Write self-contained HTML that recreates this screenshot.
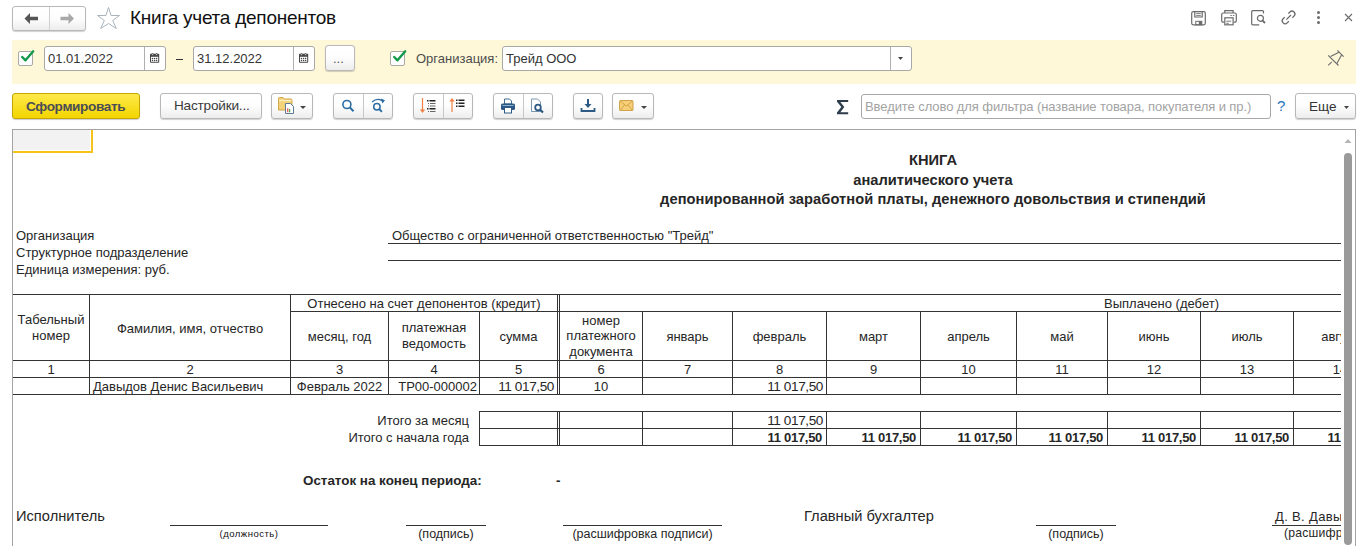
<!DOCTYPE html><html><head><meta charset="utf-8"><style>

*{box-sizing:border-box;margin:0;padding:0}
html,body{width:1360px;height:546px;overflow:hidden;background:#fff}
body{position:relative;font-family:"Liberation Sans",sans-serif;color:#333}
.abs{position:absolute}
.t{position:absolute;white-space:nowrap;line-height:15px}
.btn{position:absolute;border:1px solid #b8b8b8;border-radius:3px;background:linear-gradient(#fff 0%,#fdfdfd 50%,#ededed 100%);box-shadow:0 1px 1px rgba(0,0,0,.18)}
.hl{position:absolute;height:1px;background:#333}
.vl{position:absolute;width:1px;background:#333}
.c{position:absolute;display:flex;align-items:center;justify-content:center;text-align:center;white-space:nowrap;font-size:13px;line-height:15.6px;color:#262626}
.r{justify-content:flex-end;padding-right:2px}
.l{justify-content:flex-start;padding-left:2px}
.b{font-weight:bold}
.num{font-size:13.6px;letter-spacing:-0.4px;padding-right:3px}

</style></head><body>
<div class="btn" style="left:12px;top:6px;width:74px;height:25px"></div>
<div class="abs" style="left:49px;top:7px;width:1px;height:23px;background:#d0d0d0"></div>
<svg class="abs" style="left:24px;top:12px" width="16" height="13" viewBox="0 0 16 13"><path d="M0.5 6.5 L6 1 L6 4.8 L14 4.8 L14 8.2 L6 8.2 L6 12 Z" fill="#555"/></svg>
<svg class="abs" style="left:59px;top:12px" width="16" height="13" viewBox="0 0 16 13"><path d="M15 6.5 L9.5 1 L9.5 4.8 L1.5 4.8 L1.5 8.2 L9.5 8.2 L9.5 12 Z" fill="#a8a8a8"/></svg>
<svg class="abs" style="left:96px;top:6px" width="26" height="25" viewBox="0 0 26 25"><path d="M12.5 1.5 L15.1 9.5 L23.5 9.5 L16.7 14.5 L20.3 22.5 L12.5 17.5 L4.7 22.5 L8.3 14.5 L1.5 9.5 L9.9 9.5 Z" fill="none" stroke="#aab4bc" stroke-width="1" stroke-linejoin="miter"/></svg>
<div class="t" style="left:130px;top:7px;font-size:19px;letter-spacing:-0.25px;line-height:22px;color:#111">Книга учета депонентов</div>
<svg class="abs" style="left:1190px;top:10px" width="17" height="16" viewBox="0 0 17 16" fill="none" stroke="#6b6b6b" stroke-width="1.2">
<rect x="1.7" y="1.7" width="13.6" height="13.1" rx="1.5"/><path d="M4.8 1.7 V7 H12.2 V1.7"/><path d="M6.2 3.4 H10.8 M6.2 5.4 H10.8" stroke-width="0.9"/>
<rect x="5.8" y="11.3" width="6" height="3.5" stroke-width="1"/><rect x="8.8" y="11.3" width="3" height="3.5" fill="#6b6b6b" stroke="none"/></svg>
<svg class="abs" style="left:1220px;top:9px" width="18" height="17" viewBox="0 0 18 17" fill="none" stroke="#6b6b6b" stroke-width="1.2">
<path d="M4.8 4 V1.7 H13.1 V4"/><path d="M4.3 13.2 H3.2 a1.5 1.5 0 0 1 -1.5 -1.5 V5.5 a1.5 1.5 0 0 1 1.5 -1.5 H14.8 a1.5 1.5 0 0 1 1.5 1.5 V11.7 a1.5 1.5 0 0 1 -1.5 1.5 H13.7"/>
<rect x="4.8" y="8.8" width="8.3" height="7"/><path d="M6.3 12.2 H11.2 M6.3 14.3 H8.8 M10.3 6.5 H11.8 M12.8 6.5 H14.3" stroke-width="0.9"/></svg>
<svg class="abs" style="left:1250px;top:9px" width="17" height="17" viewBox="0 0 17 17" fill="none" stroke="#6b6b6b" stroke-width="1.2">
<path d="M13.5 4.5 V2.7 a1 1 0 0 0 -1 -1 H2.7 a1 1 0 0 0 -1 1 V14.8 a1 1 0 0 0 1 1 H9.2"/><circle cx="10.4" cy="9.3" r="3"/><path d="M12.6 11.6 L15 14" stroke-width="1.8"/></svg>
<svg class="abs" style="left:1280px;top:9px" width="17" height="17" viewBox="0 0 17 17" fill="none" stroke="#6b6b6b" stroke-width="1.3">
<g transform="translate(8.5 8.5) rotate(-45)"><path d="M2.6 -2.9 H4.9 A2.9 2.9 0 0 1 4.9 2.9 H2.6 M-2.4 -2.9 H-4.7 A2.9 2.9 0 0 0 -4.7 2.9 H-2.4 M-3 0 H3.5"/></g></svg>
<div class="abs" style="left:1317px;top:11px;width:3px;height:3px;border-radius:50%;background:#6b6b6b"></div>
<div class="abs" style="left:1317px;top:16px;width:3px;height:3px;border-radius:50%;background:#6b6b6b"></div>
<div class="abs" style="left:1317px;top:21px;width:3px;height:3px;border-radius:50%;background:#6b6b6b"></div>
<svg class="abs" style="left:1344px;top:13px" width="9" height="9" viewBox="0 0 9 9" stroke="#6b6b6b" stroke-width="1.1"><path d="M1 1 L8 8 M8 1 L1 8"/></svg>
<div class="abs" style="left:12px;top:40px;width:1344px;height:44px;background:#fff8d8"></div>
<div class="abs" style="left:18px;top:51px;width:15px;height:15px;border:1px solid #a9a9a9;border-radius:2px;background:#fff"></div>
<svg class="abs" style="left:20px;top:48px" width="16" height="16" viewBox="0 0 16 16"><path d="M2.2 9 L5.5 12.3 L13.2 3.3" fill="none" stroke="#12994a" stroke-width="2.4" stroke-linecap="round" stroke-linejoin="round"/></svg>
<div class="abs" style="left:390px;top:51px;width:15px;height:15px;border:1px solid #a9a9a9;border-radius:2px;background:#fff"></div>
<svg class="abs" style="left:392px;top:48px" width="16" height="16" viewBox="0 0 16 16"><path d="M2.2 9 L5.5 12.3 L13.2 3.3" fill="none" stroke="#12994a" stroke-width="2.4" stroke-linecap="round" stroke-linejoin="round"/></svg>
<div class="abs" style="left:44px;top:46px;width:122px;height:25px;border:1px solid #a8a8a8;border-radius:3px;background:#fff"></div>
<div class="abs" style="left:144px;top:47px;width:1px;height:23px;background:#b0b0b0"></div>
<div class="t" style="left:48px;top:51px;font-size:13px;color:#333">01.01.2022</div>
<svg class="abs" style="left:149px;top:52px" width="12" height="12" viewBox="0 0 12 12"><rect x="1" y="1.8" width="9.2" height="9" rx="0.8" fill="#454545"/><rect x="2" y="4.8" width="7.2" height="5" fill="#fff"/>
<circle cx="3.5" cy="2.4" r="0.9" fill="#fff" stroke="#454545" stroke-width="0.8"/><circle cx="7.6" cy="2.4" r="0.9" fill="#fff" stroke="#454545" stroke-width="0.8"/>
<g fill="#454545"><circle cx="3.5" cy="6.4" r="0.75"/><circle cx="5.55" cy="6.4" r="0.75"/><circle cx="7.6" cy="6.4" r="0.75"/><circle cx="3.5" cy="8.5" r="0.75"/><circle cx="5.55" cy="8.5" r="0.75"/><circle cx="7.6" cy="8.5" r="0.75"/></g></svg>
<div class="abs" style="left:176px;top:59px;width:7px;height:1px;background:#333"></div>
<div class="abs" style="left:193px;top:46px;width:122px;height:25px;border:1px solid #a8a8a8;border-radius:3px;background:#fff"></div>
<div class="abs" style="left:293px;top:47px;width:1px;height:23px;background:#b0b0b0"></div>
<div class="t" style="left:197px;top:51px;font-size:13px;color:#333">31.12.2022</div>
<svg class="abs" style="left:298px;top:52px" width="12" height="12" viewBox="0 0 12 12"><rect x="1" y="1.8" width="9.2" height="9" rx="0.8" fill="#454545"/><rect x="2" y="4.8" width="7.2" height="5" fill="#fff"/>
<circle cx="3.5" cy="2.4" r="0.9" fill="#fff" stroke="#454545" stroke-width="0.8"/><circle cx="7.6" cy="2.4" r="0.9" fill="#fff" stroke="#454545" stroke-width="0.8"/>
<g fill="#454545"><circle cx="3.5" cy="6.4" r="0.75"/><circle cx="5.55" cy="6.4" r="0.75"/><circle cx="7.6" cy="6.4" r="0.75"/><circle cx="3.5" cy="8.5" r="0.75"/><circle cx="5.55" cy="8.5" r="0.75"/><circle cx="7.6" cy="8.5" r="0.75"/></g></svg>
<div class="btn" style="left:325px;top:45px;width:30px;height:26px"></div>
<div class="t" style="left:333px;top:51px;font-size:13px;color:#555">...</div>
<div class="t" style="left:416px;top:51px;font-size:13px;color:#4d4d4d">Организация:</div>
<div class="abs" style="left:502px;top:46px;width:410px;height:25px;border:1px solid #a8a8a8;border-radius:3px;background:#fff"></div>
<div class="abs" style="left:890px;top:47px;width:1px;height:23px;background:#b0b0b0"></div>
<div class="t" style="left:506px;top:51px;font-size:13px;color:#333">Трейд ООО</div>
<svg class="abs" style="left:898px;top:57px" width="5" height="3" viewBox="0 0 5 3"><path d="M0 0 H5 L2.5 3 Z" fill="#444"/></svg>
<svg class="abs" style="left:1327px;top:49px" width="18" height="18" viewBox="0 0 18 18" fill="none" stroke="#6b6b6b" stroke-width="1.1">
<path d="M1.2 16.3 L4.8 12.9"/><path d="M1.2 6.3 L11.5 16.5"/><path d="M3.5 7.6 L12 3.2"/><path d="M9.9 14.5 L14.5 6"/><path d="M10.4 1.4 L16.6 7.6"/></svg>
<div class="abs" style="left:12px;top:93px;width:128px;height:26px;border:1px solid #c4a600;border-radius:3px;background:linear-gradient(#ffe94a,#f3d500);box-shadow:0 1px 1px rgba(0,0,0,.2)"></div>
<div class="t b" style="left:26px;top:98.5px;font-size:13.6px;letter-spacing:-0.35px;color:#4a4d55">Сформировать</div>
<div class="btn" style="left:160px;top:93px;width:102px;height:26px"></div>
<div class="t" style="left:174px;top:98px;font-size:13.6px;letter-spacing:-0.2px;color:#3a3a3a">Настройки...</div>
<div class="btn" style="left:271px;top:93px;width:42px;height:26px"></div>
<svg class="abs" style="left:277px;top:96px" width="20" height="19" viewBox="0 0 20 19">
<path d="M1.5 2.5 Q1.5 1.5 2.5 1.5 H6 L7.5 3 H14 Q15 3 15 4 V14 H1.5 Z" fill="#f3d27a" stroke="#c8952e" stroke-width="0.8"/><path d="M2 4.5 H14.5" stroke="#fdf0c0" stroke-width="1.2"/>
<path d="M8.5 7.5 H13.5 L16.5 10.5 V17.5 H8.5 Z" fill="#fff" stroke="#5f7d99" stroke-width="1"/>
<rect x="10.2" y="12.3" width="1.1" height="4" fill="#e43a3a"/><rect x="12.1" y="13" width="1.1" height="3.3" fill="#3aa53a"/></svg>
<svg class="abs" style="left:300px;top:106px" width="6" height="3" viewBox="0 0 6 3"><path d="M0 0 H6 L3.0 3 Z" fill="#444"/></svg>
<div class="btn" style="left:333px;top:93px;width:60px;height:26px"></div>
<div class="abs" style="left:363px;top:94px;width:1px;height:24px;background:#c8c8c8"></div>
<svg class="abs" style="left:341px;top:98px" width="15" height="15" viewBox="0 0 15 15" fill="none" stroke="#2a6ca3"><circle cx="5.9" cy="6.5" r="4" stroke-width="1.6"/><path d="M8.8 9.4 L12.5 13.3" stroke-width="2.1"/></svg>
<svg class="abs" style="left:370px;top:97px" width="16" height="16" viewBox="0 0 16 16" fill="none" stroke="#2a6ca3"><circle cx="6.9" cy="9.7" r="3.2" stroke-width="1.5"/><path d="M9.2 12 L11.9 14.8" stroke-width="1.9"/><path d="M2.1 5 Q7 0.6 12 3.6" stroke-width="1.4"/><path d="M10.8 1.6 L15 3.2 L12.4 6.6 Z" fill="#2a6ca3" stroke="none"/></svg>
<div class="btn" style="left:413px;top:93px;width:60px;height:26px"></div>
<div class="abs" style="left:443px;top:94px;width:1px;height:24px;background:#c8c8c8"></div>
<svg class="abs" style="left:419px;top:97px" width="18" height="18" viewBox="0 0 18 18">
<path d="M3.5 1 V14" stroke="#f08040" stroke-width="1.2"/><path d="M0.8 12.5 L3.5 16 L6.2 12.5 Z" fill="#f08040"/>
<rect x="8" y="3" width="1.5" height="1.5" fill="#222"/><rect x="10.5" y="3" width="6" height="1.5" fill="#222"/>
<rect x="9" y="6" width="1" height="1" fill="#666"/><rect x="11" y="6" width="5.5" height="1" fill="#666"/>
<rect x="9" y="8.5" width="1" height="1" fill="#666"/><rect x="11" y="8.5" width="5.5" height="1" fill="#666"/>
<rect x="8" y="11" width="1.5" height="1.5" fill="#222"/><rect x="10.5" y="11" width="6" height="1.5" fill="#222"/>
<rect x="9" y="14" width="1" height="1" fill="#666"/><rect x="11" y="14" width="5.5" height="1" fill="#666"/></svg>
<svg class="abs" style="left:448px;top:97px" width="18" height="18" viewBox="0 0 18 18">
<path d="M4 3 V15" stroke="#f08040" stroke-width="1.2"/><path d="M1.3 4.5 L4 1 L6.7 4.5 Z" fill="#f08040"/>
<rect x="8" y="2.5" width="1.5" height="1.5" fill="#222"/><rect x="10.5" y="2.5" width="6" height="1.5" fill="#222"/>
<rect x="8" y="5.5" width="1.5" height="1.5" fill="#222"/><rect x="10.5" y="5.5" width="6" height="1.5" fill="#222"/>
<rect x="8" y="8.5" width="1.5" height="1.5" fill="#222"/><rect x="10.5" y="8.5" width="6" height="1.5" fill="#222"/></svg>
<div class="btn" style="left:493px;top:93px;width:60px;height:26px"></div>
<div class="abs" style="left:523px;top:94px;width:1px;height:24px;background:#c8c8c8"></div>
<svg class="abs" style="left:500px;top:98px" width="16" height="16" viewBox="0 0 16 16">
<path d="M4.5 1 H9.5 L11.5 3 V6 H4.5 Z" fill="#fff" stroke="#2d5a85" stroke-width="0.9"/>
<rect x="1" y="5.5" width="14" height="6.5" rx="1.5" fill="#2d5a85"/><rect x="2.5" y="7" width="11" height="1" fill="#8ab0d0"/>
<rect x="4.5" y="9.5" width="7" height="5.5" fill="#fff" stroke="#2d5a85" stroke-width="1"/></svg>
<svg class="abs" style="left:530px;top:98px" width="16" height="16" viewBox="0 0 16 16">
<path d="M1.5 1 H7.5 L10.5 4 V13.5 H1.5 Z" fill="#fff" stroke="#6a8aa6" stroke-width="0.9"/>
<circle cx="8" cy="9.5" r="2.8" fill="#fff" stroke="#2d5a85" stroke-width="1.8"/><path d="M10 11.5 L13 14.5" stroke="#2d5a85" stroke-width="2.2"/></svg>
<div class="btn" style="left:573px;top:93px;width:30px;height:26px"></div>
<svg class="abs" style="left:580px;top:98px" width="16" height="15" viewBox="0 0 16 15">
<path d="M8 1 V9" stroke="#2d5a85" stroke-width="2"/><path d="M4.5 6 L8 10 L11.5 6 Z" fill="#2d5a85"/>
<path d="M1.5 10 V13 H14.5 V10" fill="none" stroke="#2d5a85" stroke-width="1.8"/></svg>
<div class="btn" style="left:612px;top:93px;width:42px;height:26px"></div>
<svg class="abs" style="left:619px;top:100px" width="16" height="12" viewBox="0 0 16 12">
<rect x="0.5" y="0.5" width="13.5" height="10" rx="1" fill="#f6cf78" stroke="#c99a3a" stroke-width="0.9"/>
<path d="M1 1 L7.25 6 L13.5 1 M1 10.5 L5.5 5 M13.5 10.5 L9 5" fill="none" stroke="#c99a3a" stroke-width="0.8"/></svg>
<svg class="abs" style="left:641px;top:106px" width="6" height="3" viewBox="0 0 6 3"><path d="M0 0 H6 L3.0 3 Z" fill="#444"/></svg>
<svg class="abs" style="left:836px;top:99px" width="14" height="17" viewBox="0 0 14 17"><path d="M1 1 H12.2 V3 H4.4 L8.3 8.1 L4.4 13.2 H12.2 V15.2 H1 V13.4 L5.3 8.1 L1 2.8 Z" fill="#2e3d4b"/></svg>
<div class="abs" style="left:861px;top:94px;width:410px;height:25px;border:1px solid #a8a8a8;border-radius:3px;background:#fff"></div>
<div class="t" style="left:865px;top:99px;font-size:13px;letter-spacing:-0.08px;color:#a3a3a3">Введите слово для фильтра (название товара, покупателя и пр.)</div>
<div class="t" style="left:1277px;top:98px;font-size:15px;color:#1f74c0">?</div>
<div class="btn" style="left:1295px;top:93px;width:61px;height:26px"></div>
<div class="t" style="left:1309px;top:99px;font-size:13.5px;color:#333">Еще</div>
<svg class="abs" style="left:1344px;top:106px" width="5" height="3" viewBox="0 0 5 3"><path d="M0 0 H5 L2.5 3 Z" fill="#444"/></svg>
<div class="abs" style="left:12px;top:129px;width:1344px;height:430px;border:1px solid #a3a3a3;border-bottom:none"></div>
<div class="abs" style="left:13px;top:130px;width:77px;height:20px;background:#f2f2f2"></div>
<div class="abs" style="left:91px;top:130px;width:2px;height:23px;background:#f7c21a"></div>
<div class="abs" style="left:13px;top:151px;width:80px;height:2px;background:#f7c21a"></div>
<svg class="abs" style="left:1344px;top:138px" width="8" height="6" viewBox="0 0 8 6"><path d="M0.5 5 L4 1 L7.5 5 Z" fill="#b5b5b5"/></svg>
<div class="abs" style="left:1344px;top:153px;width:8px;height:392px;border-radius:4px;background:#9a9a9a"></div>
<div class="abs" style="left:13px;top:130px;width:1328px;height:416px;overflow:hidden">
<div class="t" style="left:520px;top:20px;width:800px;text-align:center;font-size:14.67px;font-weight:700;line-height:20px;color:#262626">КНИГА</div>
<div class="t" style="left:520px;top:40px;width:800px;text-align:center;font-size:14.67px;font-weight:700;line-height:20px;color:#262626">аналитического учета</div>
<div class="t" style="left:520px;top:59px;width:800px;text-align:center;font-size:14.67px;font-weight:700;line-height:20px;color:#262626"><span style="letter-spacing:0.06px">депонированной заработной платы, денежного довольствия и стипендий</span></div>
<div class="t" style="left:3px;top:98px;font-size:13px;font-weight:400;color:#262626;line-height:15px;">Организация</div>
<div class="t" style="left:3px;top:115px;font-size:13px;font-weight:400;color:#262626;line-height:15px;">Структурное подразделение</div>
<div class="t" style="left:3px;top:132px;font-size:13px;font-weight:400;color:#262626;line-height:15px;">Единица измерения: руб.</div>
<div class="t" style="left:379px;top:98px;font-size:13px;font-weight:400;color:#262626;line-height:15px;">Общество с ограниченной ответственностью "Трейд"</div>
<div class="hl" style="left:375px;top:113px;width:953px;background:#333"></div>
<div class="hl" style="left:375px;top:130px;width:953px;background:#333"></div>
<div class="hl" style="left:0px;top:164px;width:1328px;background:#333"></div>
<div class="hl" style="left:277px;top:181px;width:1051px;background:#333"></div>
<div class="hl" style="left:0px;top:230px;width:1328px;background:#333"></div>
<div class="hl" style="left:0px;top:247px;width:1328px;background:#333"></div>
<div class="hl" style="left:0px;top:264px;width:1328px;background:#333"></div>
<div class="vl" style="left:76px;top:164px;height:101px"></div>
<div class="vl" style="left:277px;top:164px;height:101px"></div>
<div class="vl" style="left:375px;top:181px;height:84px"></div>
<div class="vl" style="left:466px;top:181px;height:84px"></div>
<div class="vl" style="left:544px;top:164px;height:101px"></div>
<div class="vl" style="left:629px;top:181px;height:84px"></div>
<div class="vl" style="left:719px;top:181px;height:84px"></div>
<div class="vl" style="left:813px;top:181px;height:84px"></div>
<div class="vl" style="left:907px;top:181px;height:84px"></div>
<div class="vl" style="left:1003px;top:181px;height:84px"></div>
<div class="vl" style="left:1094px;top:181px;height:84px"></div>
<div class="vl" style="left:1187px;top:181px;height:84px"></div>
<div class="vl" style="left:1280px;top:181px;height:84px"></div>
<div class="vl" style="left:546px;top:164px;height:101px"></div>
<div class="c " style="left:0px;top:165px;width:76px;height:65px;">Табельный<br>номер</div>
<div class="c " style="left:77px;top:166px;width:200px;height:65px;">Фамилия, имя, отчество</div>
<div class="c " style="left:278px;top:166px;width:266px;height:16px;line-height:16px">Отнесено на счет депонентов (кредит)</div>
<div class="c " style="left:547px;top:166px;width:1203px;height:16px;line-height:16px">Выплачено (дебет)</div>
<div class="c " style="left:278px;top:183px;width:97px;height:48px;">месяц, год</div>
<div class="c " style="left:376px;top:182px;width:90px;height:48px;">платежная<br>ведомость</div>
<div class="c " style="left:467px;top:183px;width:77px;height:48px;">сумма</div>
<div class="c " style="left:547px;top:182px;width:82px;height:48px;">номер<br>платежного<br>документа</div>
<div class="c " style="left:630px;top:183px;width:89px;height:48px;">январь</div>
<div class="c " style="left:720px;top:183px;width:93px;height:48px;">февраль</div>
<div class="c " style="left:814px;top:183px;width:93px;height:48px;">март</div>
<div class="c " style="left:908px;top:183px;width:95px;height:48px;">апрель</div>
<div class="c " style="left:1004px;top:183px;width:90px;height:48px;">май</div>
<div class="c " style="left:1095px;top:183px;width:92px;height:48px;">июнь</div>
<div class="c " style="left:1188px;top:183px;width:92px;height:48px;">июль</div>
<div class="c " style="left:1281px;top:183px;width:92px;height:48px;">август</div>
<div class="c " style="left:0px;top:232px;width:76px;height:16px;line-height:16px">1</div>
<div class="c " style="left:77px;top:232px;width:200px;height:16px;line-height:16px">2</div>
<div class="c " style="left:278px;top:232px;width:97px;height:16px;line-height:16px">3</div>
<div class="c " style="left:376px;top:232px;width:90px;height:16px;line-height:16px">4</div>
<div class="c " style="left:467px;top:232px;width:77px;height:16px;line-height:16px">5</div>
<div class="c " style="left:547px;top:232px;width:82px;height:16px;line-height:16px">6</div>
<div class="c " style="left:630px;top:232px;width:89px;height:16px;line-height:16px">7</div>
<div class="c " style="left:720px;top:232px;width:93px;height:16px;line-height:16px">8</div>
<div class="c " style="left:814px;top:232px;width:93px;height:16px;line-height:16px">9</div>
<div class="c " style="left:908px;top:232px;width:95px;height:16px;line-height:16px">10</div>
<div class="c " style="left:1004px;top:232px;width:90px;height:16px;line-height:16px">11</div>
<div class="c " style="left:1095px;top:232px;width:92px;height:16px;line-height:16px">12</div>
<div class="c " style="left:1188px;top:232px;width:92px;height:16px;line-height:16px">13</div>
<div class="c " style="left:1281px;top:232px;width:92px;height:16px;line-height:16px">14</div>
<div class="c l" style="left:77px;top:249px;width:200px;height:16px;line-height:16px;padding-left:3px">Давыдов Денис Васильевич</div>
<div class="c " style="left:278px;top:249px;width:97px;height:16px;line-height:16px">Февраль 2022</div>
<div class="c r" style="left:376px;top:249px;width:90px;height:16px;line-height:16px">ТР00-000002</div>
<div class="c r num" style="left:467px;top:249px;width:77px;height:16px;line-height:16px">11 017,50</div>
<div class="c " style="left:547px;top:249px;width:82px;height:16px;line-height:16px">10</div>
<div class="c r num" style="left:720px;top:249px;width:93px;height:16px;line-height:16px">11 017,50</div>
<div class="hl" style="left:466px;top:281px;width:862px;background:#333"></div>
<div class="hl" style="left:466px;top:298px;width:862px;background:#333"></div>
<div class="hl" style="left:466px;top:315px;width:862px;background:#333"></div>
<div class="vl" style="left:466px;top:281px;height:35px"></div>
<div class="vl" style="left:544px;top:281px;height:35px"></div>
<div class="vl" style="left:546px;top:281px;height:35px"></div>
<div class="vl" style="left:629px;top:281px;height:35px"></div>
<div class="vl" style="left:719px;top:281px;height:35px"></div>
<div class="vl" style="left:813px;top:281px;height:35px"></div>
<div class="vl" style="left:907px;top:281px;height:35px"></div>
<div class="vl" style="left:1003px;top:281px;height:35px"></div>
<div class="vl" style="left:1094px;top:281px;height:35px"></div>
<div class="vl" style="left:1187px;top:281px;height:35px"></div>
<div class="vl" style="left:1280px;top:281px;height:35px"></div>
<div class="c r" style="left:187px;top:283px;width:271px;height:16px;line-height:16px">Итого за месяц</div>
<div class="c r" style="left:187px;top:300px;width:271px;height:16px;line-height:16px">Итого с начала года</div>
<div class="c r num" style="left:720px;top:283px;width:93px;height:16px;line-height:16px">11 017,50</div>
<div class="c r b" style="left:720px;top:300px;width:93px;height:16px;line-height:16px;padding-right:4px;letter-spacing:-0.3px">11 017,50</div>
<div class="c r b" style="left:814px;top:300px;width:93px;height:16px;line-height:16px;padding-right:4px;letter-spacing:-0.3px">11 017,50</div>
<div class="c r b" style="left:908px;top:300px;width:95px;height:16px;line-height:16px;padding-right:4px;letter-spacing:-0.3px">11 017,50</div>
<div class="c r b" style="left:1004px;top:300px;width:90px;height:16px;line-height:16px;padding-right:4px;letter-spacing:-0.3px">11 017,50</div>
<div class="c r b" style="left:1095px;top:300px;width:92px;height:16px;line-height:16px;padding-right:4px;letter-spacing:-0.3px">11 017,50</div>
<div class="c r b" style="left:1188px;top:300px;width:92px;height:16px;line-height:16px;padding-right:4px;letter-spacing:-0.3px">11 017,50</div>
<div class="c r b" style="left:1281px;top:300px;width:92px;height:16px;line-height:16px;padding-right:4px;letter-spacing:-0.3px">11 017,50</div>
<div class="t" style="left:290px;top:343px;font-size:13.4px;font-weight:700;color:#262626;line-height:15px;">Остаток на конец периода:</div>
<div class="t" style="left:543px;top:343px;font-size:13.4px;font-weight:700;color:#262626;line-height:15px;">-</div>
<div class="t" style="left:3px;top:377px;font-size:14.67px;font-weight:400;color:#262626;line-height:18px;">Исполнитель</div>
<div class="t" style="left:791px;top:377px;font-size:14.67px;font-weight:400;color:#262626;line-height:18px;">Главный бухгалтер</div>
<div class="hl" style="left:157px;top:395px;width:158px;background:#333"></div>
<div class="hl" style="left:393px;top:395px;width:80px;background:#333"></div>
<div class="hl" style="left:550px;top:395px;width:159px;background:#333"></div>
<div class="hl" style="left:1023px;top:395px;width:80px;background:#333"></div>
<div class="hl" style="left:1259px;top:395px;width:69px;background:#333"></div>
<div class="t" style="left:157px;top:397px;width:158px;text-align:center;font-size:9.5px;line-height:14px;color:#262626;letter-spacing:0.5px;color:#111">(должность)</div>
<div class="t" style="left:393px;top:397px;width:80px;text-align:center;font-size:12.5px;line-height:14px;color:#262626;">(подпись)</div>
<div class="t" style="left:550px;top:397px;width:159px;text-align:center;font-size:12.5px;line-height:14px;color:#262626;">(расшифровка подписи)</div>
<div class="t" style="left:1023px;top:397px;width:80px;text-align:center;font-size:12.5px;line-height:14px;color:#262626;">(подпись)</div>
<div class="t" style="left:1262px;top:379px;font-size:13px;font-weight:400;color:#262626;line-height:15px;letter-spacing:0.35px">Д. В. Давыдов</div>
<div class="t" style="left:1271px;top:396px;font-size:12.2px;font-weight:400;color:#262626;line-height:14px;letter-spacing:0.2px">(расшифровка подписи)</div>
</div>
</body></html>
